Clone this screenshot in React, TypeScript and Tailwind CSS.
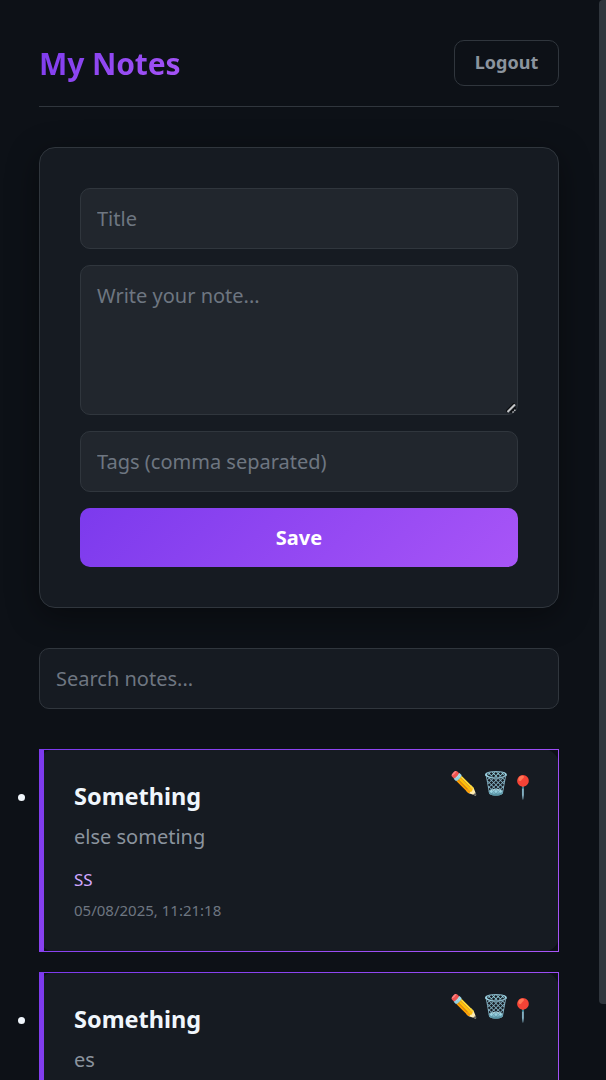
const notes = [
  { title: "Something", body: "else someting", tag: "SS", date: "05/08/2025, 11:21:18" },
  { title: "Something", body: "es" },
] as { title: string; body: string; tag?: string; date?: string }[];

const field =
  "block w-full rounded-[10px] border border-[#30363d] bg-[#21262d] px-4 text-[20px] text-[#f0f6fc] placeholder:text-[#6e7681] outline-none";

function ResizeGrip() {
  return (
    <svg className="pointer-events-none absolute right-[2px] bottom-[2px]" width="10" height="10" viewBox="0 0 10 10">
      <path d="M0 8.5 8.5 0" stroke="#0b0d10" strokeWidth="1.8" />
      <path d="M4.5 9.5 9.5 4.5" stroke="#0b0d10" strokeWidth="1.8" />
      <path d="M1.5 9 9 1.5" stroke="#c4c6c8" strokeWidth="2" />
      <path d="M6.5 9.5 9.5 6.5" stroke="#c4c6c8" strokeWidth="1.3" strokeDasharray="1.5 1" />
    </svg>
  );
}

function NoteCard({ title, body, tag, date }: (typeof notes)[number]) {
  return (
    <li className="relative h-[203px] rounded-2xl border border-l-[5px] border-solid bg-[#161b22] pt-[29px] pl-[30px] [border-image:linear-gradient(135deg,#7c3aed,#a855f7)_1]">
      <h3 className="text-[23.5px] leading-[34px] font-bold text-[#f0f6fc]">{title}</h3>
      <p className="mt-[7px] text-[20px] leading-[34px] text-[#8b949e]">{body}</p>
      {tag && <div className="mt-[12px] text-[17px] leading-[27px] text-[#d2a8ff]">{tag}</div>}
      {date && <div className="mt-[4px] text-[15px] leading-[26px] text-[#6e7681]">{date}</div>}
      <div className="absolute top-[16px] right-[24px] flex text-[22.4px] leading-[34px]">
        <button className="flex w-[32px] justify-center">✏️</button>
        <button className="flex w-[32px] justify-center">🗑️</button>
        <button className="mt-[4px] flex w-[22px] justify-center">📍</button>
      </div>
    </li>
  );
}

export default function App() {
  return (
    <div className="flex h-[1080px] w-[606px] overflow-hidden bg-[#0d1117] font-['Noto_Sans',sans-serif] text-[20px] text-[#f0f6fc]">
      <div className="w-[599px] shrink-0 pt-10 pr-10 pl-[39px]">
        <header className="flex h-[67px] items-start justify-between border-b border-[#30363d]">
          <h1 className="bg-linear-135 from-[#7c3aed] to-[#a855f7] bg-clip-text text-[30px] leading-[48px] font-bold tracking-[-0.1px] text-transparent">
            My Notes
          </h1>
          <button className="h-[46px] w-[105px] rounded-[10px] border border-[#30363d] pb-[2px] text-[18px] font-bold text-[#8b949e]">
            Logout
          </button>
        </header>

        <form className="mt-10 flex h-[461px] flex-col gap-4 rounded-2xl border border-[#30363d] bg-[#161b22] p-10 shadow-[0_8px_32px_rgba(0,0,0,0.4)]">
          <input className={`${field} h-[61px] shrink-0`} placeholder="Title" />
          <div className="relative h-[150px] shrink-0">
            <textarea className={`${field} h-[150px] resize-none pt-[15px]`} placeholder="Write your note..." />
            <ResizeGrip />
          </div>
          <input className={`${field} h-[61px] shrink-0`} placeholder="Tags (comma separated)" />
          <button
            type="button"
            className="h-[59px] shrink-0 rounded-[10px] bg-[linear-gradient(135deg,#7c3aed,#a855f7)] text-[20px] font-bold text-white"
          >
            Save
          </button>
        </form>

        <input
          className="mt-10 block h-[61px] w-full rounded-[10px] border border-[#30363d] bg-[#161b22] px-4 text-[20px] placeholder:text-[#6e7681]"
          placeholder="Search notes..."
        />

        <ul className="mt-10 flex list-disc flex-col gap-5">
          {notes.map((note, i) => (
            <NoteCard key={i} {...note} />
          ))}
        </ul>
      </div>
      <div className="h-[1004px] w-[7px] rounded-l-[4px] bg-[#30363d]" />
    </div>
  );
}
